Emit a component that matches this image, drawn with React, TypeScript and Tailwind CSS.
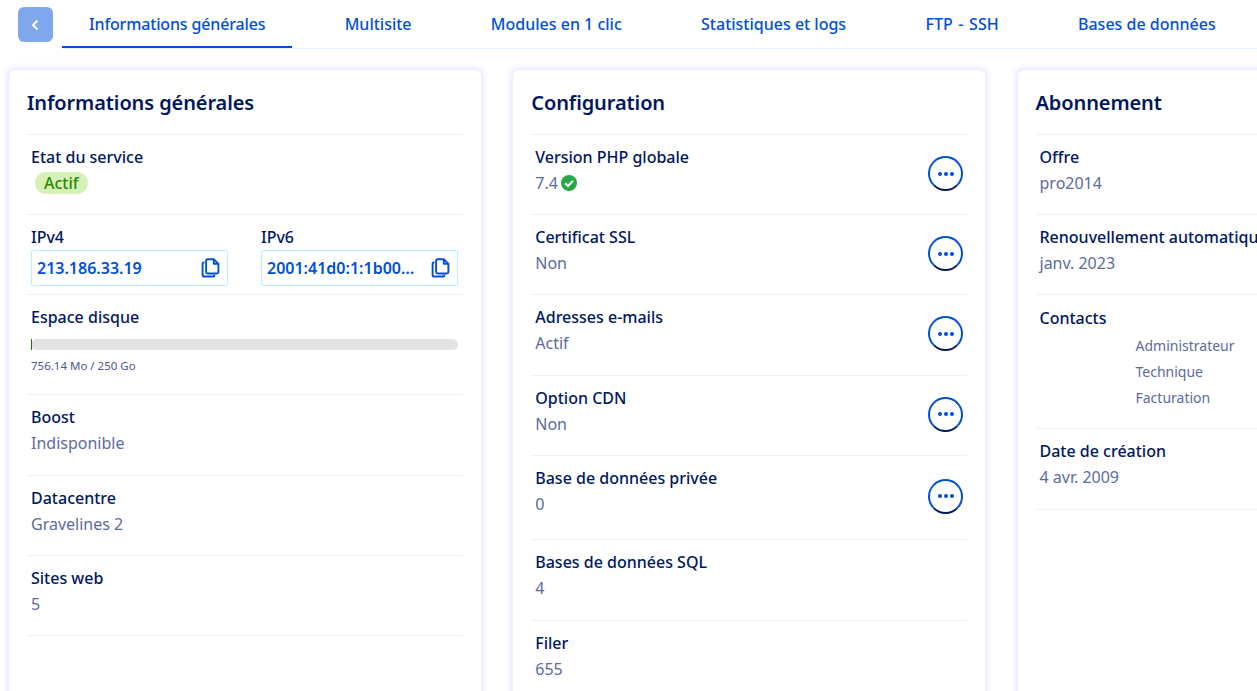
import type { ReactNode } from "react";

const tabs = [
  "Informations générales",
  "Multisite",
  "Modules en 1 clic",
  "Statistiques et logs",
  "FTP - SSH",
  "Bases de données",
];

const CopyIcon = () => (
  <svg width="20" height="20" viewBox="0 0 20 20" fill="none" stroke="#0050d7" strokeWidth="1.9" strokeLinejoin="round" className="shrink-0">
    <path d="M3.4 4.5H2.6c-.6 0-1 .4-1 1v11.4c0 .9.7 1.6 1.6 1.6h9.2c.6 0 1-.4 1-1v-.8" />
    <path d="M6.6 1.2h6.2l4.6 4.6v8.2c0 .8-.7 1.5-1.5 1.5H6.6c-.8 0-1.5-.7-1.5-1.5V2.7c0-.8.7-1.5 1.5-1.5z" />
    <path d="M12.8 1.4v4.4h4.4" />
  </svg>
);

const CheckIcon = () => (
  <svg width="16" height="16" viewBox="0 0 16 16" className="shrink-0">
    <circle cx="8" cy="8" r="8" fill="#28a745" />
    <path d="M4.2 8.2l2.8 2.7 5-5.2" fill="none" stroke="#fff" strokeWidth="2.1" />
  </svg>
);

const MoreButton = ({ low }: { low?: boolean }) => (
  <button className={`w-[35px] h-[35px] shrink-0 rounded-full border-2 border-[#0050d7] border-b-[#00185e] flex items-center justify-center gap-[2px] ${low ? "mt-[13px]" : "mt-[11px]"}`}>
    <span className="w-[4px] h-[4px] rounded-full bg-[#0050d7]" />
    <span className="w-[4px] h-[4px] rounded-full bg-[#0050d7]" />
    <span className="w-[4px] h-[4px] rounded-full bg-[#0050d7]" />
  </button>
);

const Label = ({ children }: { children: ReactNode }) => (
  <div className="text-[16px] leading-[24px] font-medium text-[#00185e]">{children}</div>
);

const Value = ({ children }: { children: ReactNode }) => (
  <div className="h-[26.2px] mt-[1px] text-[16px] leading-[26.2px] text-[#5d6a9e] flex items-center gap-[3px]">{children}</div>
);

const Row = ({ label, value, action, extra }: { label: string; value: ReactNode; action?: boolean; extra?: boolean }) => (
  <div className={`border-t border-[#eef0f4] px-[4px] pt-[10px] flex items-start justify-between ${extra ? "pb-[22.5px]" : "pb-[18px]"}`}>
    <div className="whitespace-nowrap">
      <Label>{label}</Label>
      <Value>{value}</Value>
    </div>
    {action && <MoreButton low={extra} />}
  </div>
);

const IpField = ({ label, value }: { label: string; value: string }) => (
  <div className="flex-1 min-w-0">
    <Label>{label}</Label>
    <div className="mt-[1px] h-[36px] border border-[#b8f0fa] rounded-[2px] pl-[5px] pr-[6px] flex items-center justify-between gap-[8px]">
      <span className="text-[16px] font-semibold text-[#0050d7] whitespace-nowrap">{value}</span>
      <CopyIcon />
    </div>
  </div>
);

const Card = ({ title, children }: { title: string; children: ReactNode }) => (
  <section className="w-[472px] shrink-0 h-[700px] bg-white rounded-[6px] px-[18px] shadow-[0_0_6px_2px_rgba(190,195,245,0.45)]">
    <h2 className="h-[64px] pt-[2px] flex items-center text-[20px] font-semibold tracking-[-0.1px] text-[#00185e]">{title}</h2>
    {children}
  </section>
);

export default function App() {
  return (
    <div className="w-[1257px] h-[691px] overflow-hidden bg-white font-['Noto_Sans','Lato',sans-serif]">
      <nav className="flex items-start pl-[18px] pt-[7px]">
        <button className="w-[35px] h-[35px] rounded-[6px] bg-[#7fa7ee] flex items-center justify-center shrink-0">
          <svg width="12" height="12" viewBox="0 0 12 12" fill="none" stroke="#fff" strokeWidth="2">
            <path d="M7.5 1.5L3 6l4.5 4.5" />
          </svg>
        </button>
        <div className="ml-[9px] flex-1 flex gap-[25.3px] border-b border-[#e6f2ff] whitespace-nowrap">
          {tabs.map((tab, i) => (
            <div
              key={tab}
              className={`h-[41px] px-[27px] pb-[6px] flex items-center text-[16px] font-medium text-[#0050d7] border-b-2 ${i === 0 ? "border-[#0050d7] tracking-[-0.15px]" : "border-transparent"} ${tab === "FTP - SSH" ? "[word-spacing:1.5px]" : ""}`}
            >
              {tab}
            </div>
          ))}
        </div>
      </nav>

      <main className="flex gap-[32.25px] pl-[9px] pt-[21px]">
        <Card title="Informations générales">
          <Row label="Etat du service" value={<span className="ml-[4px] px-[9px] h-[22px] rounded-full bg-[#d6f0b8] text-[#2a8a00] font-medium text-[16px] leading-[22px]">Actif</span>} />
          <div className="border-t border-[#eef0f4] pl-[4px] pr-[5px] pt-[10px] h-[80px] flex gap-[33px]">
            <IpField label="IPv4" value="213.186.33.19" />
            <IpField label="IPv6" value="2001:41d0:1:1b00…" />
          </div>
          <div className="border-t border-[#eef0f4] pl-[4px] pr-[5px] pt-[10px] h-[100.2px]">
            <Label>Espace disque</Label>
            <div className="mt-[10px] h-[11px] rounded-full bg-[#e3e3e3]">
              <div className="w-[1px] h-full bg-[#2a6a10]" />
            </div>
            <div className="mt-[8px] text-[11.5px] leading-[16px] text-[#4d5693]">756.14 Mo / 250 Go</div>
          </div>
          <Row label="Boost" value="Indisponible" />
          <Row label="Datacentre" value="Gravelines 2" />
          <Row label="Sites web" value="5" />
          <div className="border-t border-[#eef0f4]" />
        </Card>

        <Card title="Configuration">
          <Row label="Version PHP globale" value={<><span>7.4</span><CheckIcon /></>} action />
          <Row label="Certificat SSL" value="Non" action />
          <Row label="Adresses e-mails" value="Actif" action />
          <Row label="Option CDN" value="Non" action />
          <Row label="Base de données privée" value="0" action extra />
          <Row label="Bases de données SQL" value="4" />
          <Row label="Filer" value="655" />
        </Card>

        <Card title="Abonnement">
          <Row label="Offre" value="pro2014" />
          <Row label="Renouvellement automatique" value="janv. 2023" />
          <div className="border-t border-[#eef0f4] pl-[4px] pt-[11px] h-[134px]">
            <Label>Contacts</Label>
            <div className="mt-[3px] pl-[96px] text-[14px] leading-[26px] text-[#5d6a9e]">
              <div>Administrateur</div>
              <div>Technique</div>
              <div>Facturation</div>
            </div>
          </div>
          <Row label="Date de création" value="4 avr. 2009" />
          <div className="border-t border-[#eef0f4]" />
        </Card>
      </main>
    </div>
  );
}
